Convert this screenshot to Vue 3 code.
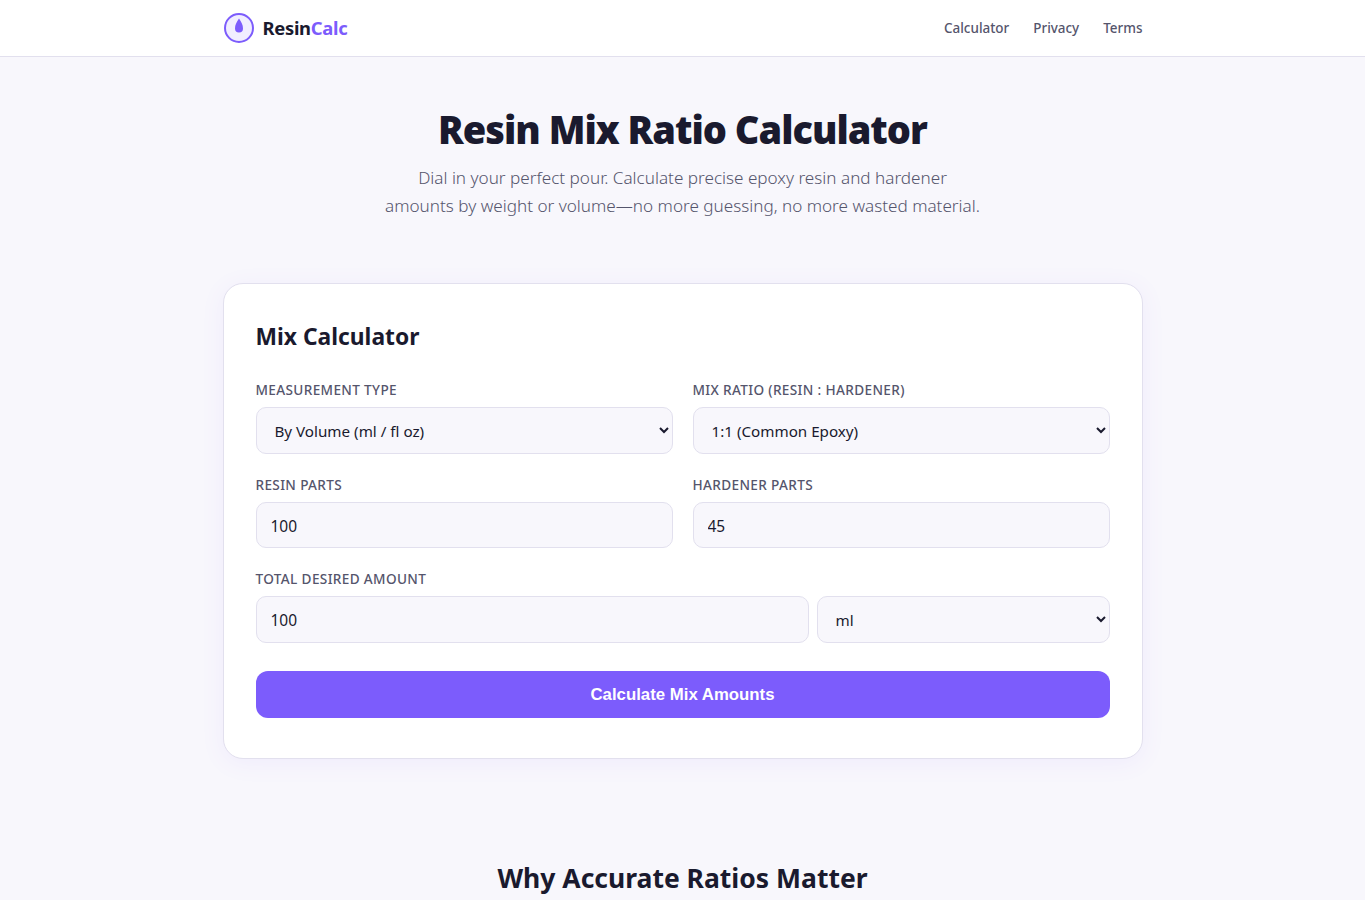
<script setup>
const nav = ['Calculator', 'Privacy', 'Terms']
</script>

<template>
  <div class="page">
    <header class="top">
      <div class="wrap bar">
        <a class="brand">
          <svg class="logo" width="32" height="32" viewBox="0 0 32 32">
            <circle cx="16" cy="16" r="14" fill="#f1eeff" stroke="#7c5cfc" stroke-width="2" />
            <path d="M16 6.500c2.300 3.600 4 6.200 4 10a4 4 0 0 1-8 0c0-3.800 1.700-6.400 4-10z" fill="#7c5cfc" />
          </svg>
          <span class="name">Resin<em>Calc</em></span>
        </a>
        <nav class="nav">
          <a v-for="n in nav" :key="n">{{ n }}</a>
        </nav>
      </div>
    </header>

    <section class="hero">
      <h1>Resin Mix Ratio Calculator</h1>
      <p>Dial in your perfect pour. Calculate precise epoxy resin and hardener amounts by weight or volume—no more guessing, no more wasted material.</p>
    </section>

    <main class="wrap">
      <div class="card">
        <h2>Mix Calculator</h2>
        <div class="grid">
          <div class="field">
            <label>Measurement Type</label>
            <select class="ctl sel"><option>By Volume (ml / fl oz)</option></select>
          </div>
          <div class="field">
            <label>Mix Ratio (Resin : Hardener)</label>
            <select class="ctl sel"><option>1:1 (Common Epoxy)</option></select>
          </div>
          <div class="field">
            <label>Resin Parts</label>
            <input class="ctl num" value="100" />
          </div>
          <div class="field">
            <label>Hardener Parts</label>
            <input class="ctl num" value="45" />
          </div>
        </div>
        <div class="field total">
          <label>Total Desired Amount</label>
          <div class="amount">
            <input class="ctl num tall" value="100" />
            <select class="ctl sel"><option>ml</option></select>
          </div>
        </div>
        <button class="go">Calculate Mix Amounts</button>
      </div>
    </main>

    <section class="why">
      <h2>Why Accurate Ratios Matter</h2>
    </section>
  </div>
</template>

<style>
html, body { background: #f8f7fc; }
</style>

<style scoped>
.page {
  height: 900px;
  overflow: hidden;
  background: #f8f7fc;
  color: #1a1a2e;
  font-family: "Noto Sans", "Open Sans", sans-serif;
}
.wrap { width: 920px; margin: 0 auto; }
.top { background: #fff; border-bottom: 1px solid #e2e0ee; }
.bar { height: 56px; display: flex; align-items: center; justify-content: space-between; }
.brand { display: flex; align-items: center; gap: 8px; }
.logo { display: block; }
.name { font-size: 18.4px; font-weight: 700; letter-spacing: -0.3px; padding-bottom: 2px; }
.name em { font-style: normal; color: #7c5cfc; }
.nav { display: flex; gap: 24px; padding-bottom: 1px; }
.nav a { font-size: 13.45px; font-weight: 500; color: #55556c; }
.hero { text-align: center; padding-top: 47px; }
h1 { margin: 0; font-size: 38px; line-height: 50px; font-weight: 900; letter-spacing: -1px; }
.hero p {
  width: 600px;
  margin: 10px auto 0;
  font-size: 17.12px;
  line-height: 28px;
  font-weight: 300;
  color: #55556c;
}
.card {
  margin-top: 63px;
  padding: 33px 32px 40px;
  background: #fff;
  border: 1px solid #e2e0ee;
  border-radius: 20px;
  box-shadow: 0 4px 24px rgba(124, 92, 252, 0.07);
}
.card h2 { margin: 0 0 24px; font-size: 22.8px; line-height: 40px; font-weight: 700; }
.grid { display: grid; grid-template-columns: 1fr 1fr; gap: 22px 20px; }
.field { display: flex; flex-direction: column; }
.field label {
  font-size: 13.6px;
  line-height: 17px;
  font-weight: 500;
  letter-spacing: 0.35px;
  color: #55556c;
  text-transform: uppercase;
  margin-bottom: 9px;
}
.ctl {
  box-sizing: border-box;
  width: 100%;
  height: 46px;
  padding: 12px 14px;
  background: #f8f7fc;
  border: 1px solid #e2e0ee;
  border-radius: 10px;
  font-family: inherit;
  font-size: 15.2px;
  color: #1a1a2e;
  outline: none;
}
.num { padding: 13px 14px 11px; font-size: 15.5px; }
.tall { height: 47px; padding: 12px 14px; }
.sel { height: 47px; }
.total { margin-top: 22px; }
.amount { display: grid; grid-template-columns: 553px 293px; gap: 8px; }
.go {
  display: block;
  width: 100%;
  height: 47px;
  margin-top: 28px;
  background: #7c5cfc;
  color: #fff;
  border: 0;
  border-radius: 12px;
  font-family: "Liberation Sans", Arial, sans-serif;
  font-size: 16.8px;
  font-weight: 700;
}
.why { text-align: center; margin-top: 99px; }
.why h2 { margin: 0; font-size: 26.5px; line-height: 40px; font-weight: 700; }
</style>
